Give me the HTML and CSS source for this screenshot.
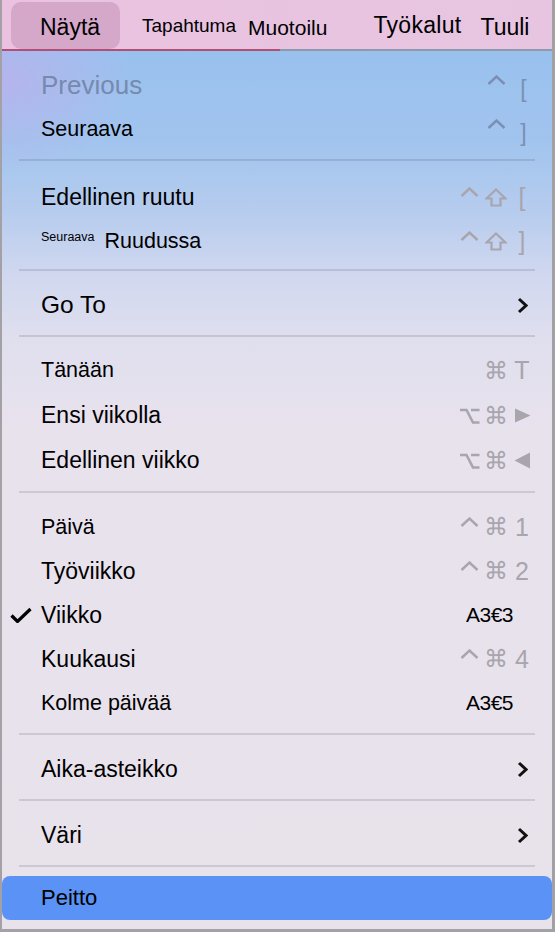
FILE: index.html
```html
<!DOCTYPE html>
<html lang="fi">
<head>
    <meta charset="UTF-8">
    <meta name="viewport" content="width=device-width, initial-scale=1.0">
    <title>Näytä</title>
    <link rel="stylesheet" href="styles.css">
</head>
<body>
    <div class="window">
        <!-- Menu bar -->
        <nav class="menubar">
            <span class="bar-item active">Näytä</span>
            <span class="bar-item tapahtuma">Tapahtuma</span>
            <span class="bar-item muotoilu">Muotoilu</span>
            <span class="bar-item tyokalut">Työkalut</span>
            <span class="bar-item tuuli">Tuuli</span>
        </nav>

        <div class="menu">
            <div class="group g1">
                <div class="row">
                    <span class="check"></span>
                    <span class="label disabled xl">Previous</span>
                    <span class="keys blue">
                        <span class="k2"><svg class="caret" width="19" height="10" viewBox="0 0 19 10"><polyline points="1.5,9 9.5,1.5 17.5,9"/></svg></span>
                        <span class="k3 key-sm">[</span>
                    </span>
                </div>
                <div class="row">
                    <span class="check"></span>
                    <span class="label s">Seuraava</span>
                    <span class="keys blue">
                        <span class="k2"><svg class="caret" width="19" height="10" viewBox="0 0 19 10"><polyline points="1.5,9 9.5,1.5 17.5,9"/></svg></span>
                        <span class="k3 key-sm">]</span>
                    </span>
                </div>
            </div>
            <div class="sep"></div>

            <div class="group g2">
                <div class="row">
                    <span class="check"></span>
                    <span class="label">Edellinen ruutu</span>
                    <span class="keys">
                        <span class="k1"><svg class="caret" width="19" height="10" viewBox="0 0 19 10"><polyline points="1.5,9 9.5,1.5 17.5,9"/></svg></span>
                        <span class="k2"><svg class="shift" width="22" height="19" viewBox="0 0 22 19"><path d="M11 1.5 L20.5 10.5 H15.5 V17.5 H6.5 V10.5 H1.5 Z"/></svg></span>
                        <span class="k3">[</span>
                    </span>
                </div>
                <div class="row">
                    <span class="check"></span>
                    <span class="label s"><span class="tiny">Seuraava</span>Ruudussa</span>
                    <span class="keys">
                        <span class="k1"><svg class="caret" width="19" height="10" viewBox="0 0 19 10"><polyline points="1.5,9 9.5,1.5 17.5,9"/></svg></span>
                        <span class="k2"><svg class="shift" width="22" height="19" viewBox="0 0 22 19"><path d="M11 1.5 L20.5 10.5 H15.5 V17.5 H6.5 V10.5 H1.5 Z"/></svg></span>
                        <span class="k3">]</span>
                    </span>
                </div>
            </div>
            <div class="sep"></div>

            <div class="group">
                <div class="row">
                    <span class="check"></span>
                    <span class="label l">Go To</span>
                    <svg class="chevron" width="11" height="17" viewBox="0 0 11 17"><polyline points="2,2 9,8.5 2,15"/></svg>
                </div>
            </div>
            <div class="sep"></div>

            <div class="group g4">
                <div class="row">
                    <span class="check"></span>
                    <span class="label s">Tänään</span>
                    <span class="keys">
                        <span class="k2 cmd">⌘</span>
                        <span class="k3">T</span>
                    </span>
                </div>
                <div class="row">
                    <span class="check"></span>
                    <span class="label">Ensi viikolla</span>
                    <span class="keys">
                        <span class="k1"><svg class="opt" width="21" height="18" viewBox="0 0 21 18"><path d="M1 3 H7.5 L14 15.5 H20.5 M12 3 H20.5"/></svg></span>
                        <span class="k2 cmd">⌘</span>
                        <span class="k3"><svg class="tri" width="17" height="15" viewBox="0 0 17 15"><polygon points="1,0.5 16.5,7.5 1,14.5"/></svg></span>
                    </span>
                </div>
                <div class="row">
                    <span class="check"></span>
                    <span class="label">Edellinen viikko</span>
                    <span class="keys">
                        <span class="k1"><svg class="opt" width="21" height="18" viewBox="0 0 21 18"><path d="M1 3 H7.5 L14 15.5 H20.5 M12 3 H20.5"/></svg></span>
                        <span class="k2 cmd">⌘</span>
                        <span class="k3"><svg class="tri" width="17" height="17" viewBox="0 0 17 17"><polygon points="16,0.5 0.5,8.5 16,16.5"/></svg></span>
                    </span>
                </div>
            </div>
            <div class="sep"></div>

            <div class="group">
                <div class="row">
                    <span class="check"></span>
                    <span class="label s">Päivä</span>
                    <span class="keys">
                        <span class="k1"><svg class="caret" width="19" height="10" viewBox="0 0 19 10"><polyline points="1.5,9 9.5,1.5 17.5,9"/></svg></span>
                        <span class="k2 cmd">⌘</span>
                        <span class="k3">1</span>
                    </span>
                </div>
                <div class="row">
                    <span class="check"></span>
                    <span class="label">Työviikko</span>
                    <span class="keys">
                        <span class="k1"><svg class="caret" width="19" height="10" viewBox="0 0 19 10"><polyline points="1.5,9 9.5,1.5 17.5,9"/></svg></span>
                        <span class="k2 cmd">⌘</span>
                        <span class="k3">2</span>
                    </span>
                </div>
                <div class="row">
                    <span class="check"><svg width="22" height="16" viewBox="0 0 22 16"><polyline points="1.5,8.5 7.5,14.5 20.5,2"/></svg></span>
                    <span class="label">Viikko</span>
                    <span class="keys-text">A3€3</span>
                </div>
                <div class="row">
                    <span class="check"></span>
                    <span class="label">Kuukausi</span>
                    <span class="keys">
                        <span class="k1"><svg class="caret" width="19" height="10" viewBox="0 0 19 10"><polyline points="1.5,9 9.5,1.5 17.5,9"/></svg></span>
                        <span class="k2 cmd">⌘</span>
                        <span class="k3">4</span>
                    </span>
                </div>
                <div class="row">
                    <span class="check"></span>
                    <span class="label s">Kolme päivää</span>
                    <span class="keys-text">A3€5</span>
                </div>
            </div>
            <div class="sep"></div>

            <div class="group">
                <div class="row">
                    <span class="check"></span>
                    <span class="label">Aika-asteikko</span>
                    <svg class="chevron" width="11" height="17" viewBox="0 0 11 17"><polyline points="2,2 9,8.5 2,15"/></svg>
                </div>
            </div>
            <div class="sep"></div>

            <div class="group">
                <div class="row">
                    <span class="check"></span>
                    <span class="label">Väri</span>
                    <svg class="chevron" width="11" height="17" viewBox="0 0 11 17"><polyline points="2,2 9,8.5 2,15"/></svg>
                </div>
            </div>
            <div class="sep"></div>

            <div class="group g-last">
                <div class="row selected">
                    <span class="check"></span>
                    <span class="label m">Peitto</span>
                </div>
            </div>
        </div>
    </div>
</body>
</html>
```

FILE: styles.css
```css
body {
    margin: 0;
    font-family: "Liberation Sans", Arial, sans-serif;
    color: #000;
    background: #fff;
}
.window {
    width: 555px;
    height: 932px;
    box-sizing: border-box;
    border-left: 2px solid #a3a0a6;
    border-right: 3px solid #a3a0a6;
    border-bottom: 3px solid #a3a0a6;
    display: flex;
    flex-direction: column;
    overflow: hidden;
}

/* Menu bar */
.menubar {
    height: 49px;
    flex: none;
    display: flex;
    align-items: flex-start;
    background: linear-gradient(90deg, #eac2e0, #e7c5e1);
    border-bottom: 2px solid;
    border-image: linear-gradient(90deg, #b24f74 0, #b24f74 278px, #8f99aa 278px, #8f99aa 100%) 1;
}
.bar-item {
    line-height: 1;
    white-space: nowrap;
}
.bar-item.active {
    margin: 2px 0 0 9px;
    width: 109px;
    height: 47px;
    box-sizing: border-box;
    padding: 14px 0 0 29px;
    background-color: #d5a7c9;
    border-radius: 10px;
    font-size: 23px;
}
.bar-item.tapahtuma {
    margin: 16px 0 0 22px;
    font-size: 19px;
}
.bar-item.muotoilu {
    margin: 17px 0 0 12px;
    font-size: 21px;
}
.bar-item.tyokalut {
    margin: 14px 0 0 46px;
    font-size: 23px;
    letter-spacing: 0.3px;
}
.bar-item.tuuli {
    margin: 16px 0 0 19px;
    font-size: 23px;
}

/* Menu body */
.menu {
    flex: 1;
    display: flex;
    flex-direction: column;
    background:
        radial-gradient(ellipse 130px 90px at 0 30px, rgba(190, 176, 236, 0.75), rgba(190, 176, 236, 0)),
        linear-gradient(180deg, #99c1ee 0, #a1c4ee 90px, #b6ccee 160px, #cfd7ef 220px, #e0dfee 290px, #e8e2ed 380px, #e8e2eb 100%);
}
.group {
    padding: 12px 0 8px;
}
.group.g2 {
    padding: 14px 0 6px;
}
.group.g4 .row {
    height: 45px;
}
.group.g4 {
    padding: 11px 0 8px;
}
.group.g-last {
    padding: 9px 0;
}
.sep {
    height: 2px;
    margin: 0 17px;
    background-color: rgba(40, 40, 70, 0.14);
}
.row {
    height: 44px;
    display: flex;
    align-items: center;
    padding: 0 20px 0 8px;
}
.row.selected {
    background-color: #5b92f5;
    border-radius: 8px;
}
.check {
    width: 31px;
    flex: none;
    display: flex;
    align-items: center;
}
.check svg polyline {
    fill: none;
    stroke: #000;
    stroke-width: 3.2;
}
.label {
    flex: 1;
    font-size: 23px;
    white-space: nowrap;
}
.label.xl {
    font-size: 26px;
}
.label.l {
    font-size: 24.5px;
}
.label.m {
    font-size: 22px;
}
.label.s {
    font-size: 21.5px;
}
.label.disabled {
    color: #7689ae;
}
.tiny {
    font-size: 12.5px;
    vertical-align: 7px;
    margin-right: 10px;
}

/* Shortcuts */
.keys {
    display: grid;
    grid-template-columns: 21px 22px 20px;
    column-gap: 5px;
    align-items: center;
    justify-items: center;
    color: #a8a5ad;
    font-size: 25px;
    line-height: 1;
}
.keys.blue {
    color: #7b8fb4;
}
.k1 { grid-column: 1; display: flex; }
.k2 { grid-column: 2; display: flex; }
.k3 { grid-column: 3; display: flex; }
.key-sm {
    font-size: 23px;
    margin-top: 8px;
    margin-left: 3px;
}
.cmd {
    font-family: "DejaVu Sans", sans-serif;
    font-size: 24px;
}
.caret {
    margin-bottom: 10px;
}
.caret polyline {
    fill: none;
    stroke: currentColor;
    stroke-width: 2.4;
}
.shift path {
    fill: none;
    stroke: currentColor;
    stroke-width: 2.2;
}
.opt path {
    fill: none;
    stroke: currentColor;
    stroke-width: 2.6;
}
.tri polygon {
    fill: currentColor;
}
.keys-text {
    font-size: 21px;
    margin-right: 19px;
    letter-spacing: -0.5px;
}
.chevron {
    margin-right: 4px;
}
.chevron polyline {
    fill: none;
    stroke: #111;
    stroke-width: 3;
}
```
